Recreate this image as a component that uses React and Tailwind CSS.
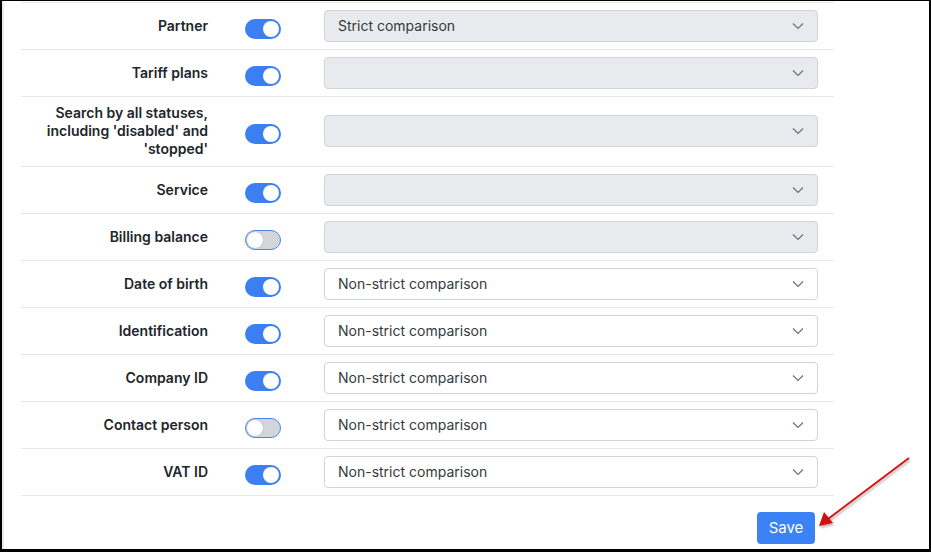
const rows = [
  { label: 'Partner', on: true, value: 'Strict comparison', disabled: true },
  { label: 'Tariff plans', on: true, value: '', disabled: true },
  { label: ['Search by all statuses,', "including 'disabled' and", "'stopped'"], on: true, value: '', disabled: true },
  { label: 'Service', on: true, value: '', disabled: true },
  { label: 'Billing balance', on: false, value: '', disabled: true },
  { label: 'Date of birth', on: true, value: 'Non-strict comparison' },
  { label: 'Identification', on: true, value: 'Non-strict comparison' },
  { label: 'Company ID', on: true, value: 'Non-strict comparison' },
  { label: 'Contact person', on: false, value: 'Non-strict comparison' },
  { label: 'VAT ID', on: true, value: 'Non-strict comparison' },
];

function Toggle({ on }) {
  return on ? (
    <div className="mt-[6px] w-[36px] h-[20px] rounded-full bg-[#3b7ff2] flex items-center justify-end px-[2px]">
      <div className="w-[16px] h-[16px] rounded-full bg-white" />
    </div>
  ) : (
    <div className="mt-[6px] w-[36px] h-[20px] rounded-full bg-[#d2d5da] border border-[#4a86f0] flex items-center px-[1px]">
      <div className="w-[16px] h-[16px] rounded-full bg-white shadow-[0_0_1px_rgba(0,0,0,0.3)]" />
    </div>
  );
}

function Chevron() {
  return (
    <svg width="12" height="8" viewBox="0 0 12 8" fill="none">
      <path d="M1 1.5 L6 6.5 L11 1.5" stroke="#6b7280" strokeWidth="1.2" />
    </svg>
  );
}

function Row({ row }) {
  const lines = Array.isArray(row.label) ? row.label : [row.label];
  return (
    <div
      className={`flex items-center border-b border-[#e5e7eb] pt-[7px] min-h-[47px] ${
        lines.length > 1 ? 'pb-[8px]' : 'pb-[7px]'
      }`}
    >
      <div className="w-[187px] text-right text-[14px] leading-[18px] font-semibold text-[#212529]">
        {lines.map((l, i) => (
          <div key={i}>{l}</div>
        ))}
      </div>
      <div className="w-[116px] pl-[37px] flex">
        <Toggle on={row.on} />
      </div>
      <div className="flex-1 pr-[16px]">
        <div
          className={`h-[32px] rounded-[4px] border border-[#ced4da] flex items-center justify-between pl-[13px] pr-[13px] pb-[1px] text-[14px] text-[#343a40] ${
            row.disabled ? 'bg-[#e8eaed]' : 'bg-white'
          }`}
        >
          <span>{row.value}</span>
          <Chevron />
        </div>
      </div>
    </div>
  );
}

export default function App() {
  return (
    <div
      className="relative w-[931px] h-[552px] bg-white border-t border-l-2 border-r-2 border-b-[3px] border-black overflow-hidden"
      style={{ fontFamily: 'Inter, "Noto Sans", sans-serif' }}
    >
      <div className="h-full border-l-2 border-[#e6e8f4] pl-[17px] pt-[1px]">
        <div className="w-[813px] border-t border-[#e5e7eb]">
          {rows.map((r, i) => (
            <Row key={i} row={r} />
          ))}
        </div>
        <div className="w-[813px] flex justify-end pt-[16px] pr-[19px]">
          <button className="w-[58px] h-[32px] rounded-[4px] bg-[#3b82f6] text-white text-[15px]">Save</button>
        </div>
      </div>
      <svg className="absolute left-0 top-0 pointer-events-none" width="931" height="552">
        <defs>
          <filter id="sh" x="-20%" y="-20%" width="140%" height="140%">
            <feDropShadow dx="1" dy="2" stdDeviation="1.2" floodColor="#000" floodOpacity="0.3" />
          </filter>
        </defs>
        <g filter="url(#sh)">
          <line x1="907" y1="457" x2="826" y2="518" stroke="#d40f0f" strokeWidth="1.8" />
          <path d="M817 525 L822 511 L831 522 Z" fill="#d40f0f" />
        </g>
      </svg>
    </div>
  );
}
